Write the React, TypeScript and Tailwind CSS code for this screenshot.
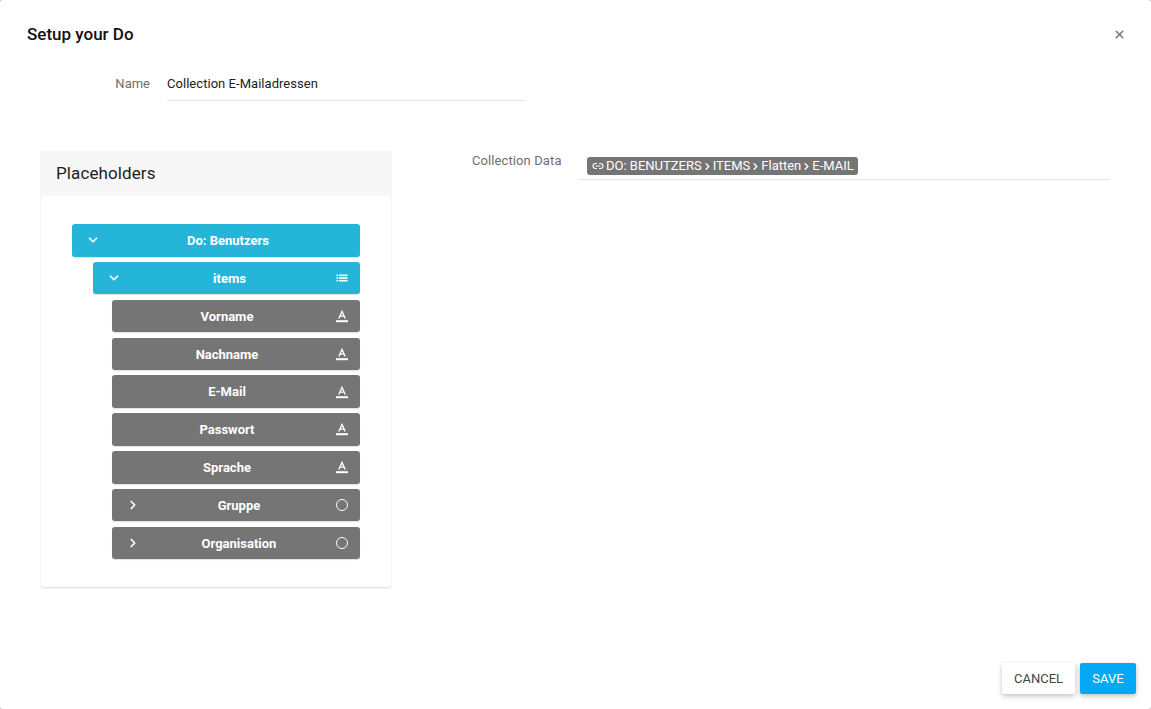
import React from "react";
import { ChevronDown, ChevronRight, Link2, X } from "lucide-react";

function TextIcon() {
  return (
    <svg width="14" height="14" viewBox="0 0 14 14" fill="none" stroke="white">
      <path d="M3.8 9.6 7 2.4l3.2 7.2M5 7.2h4" strokeWidth="1.3" />
      <path d="M1 12.2h12" strokeWidth="2" />
    </svg>
  );
}

function ListIcon() {
  return (
    <svg width="12" height="10" viewBox="0 0 12 10" fill="white">
      <rect x="0.5" y="1.5" width="1.6" height="1.6" />
      <rect x="0.5" y="4.2" width="1.6" height="1.6" />
      <rect x="0.5" y="6.9" width="1.6" height="1.6" />
      <rect x="3" y="1.5" width="8.5" height="1.6" />
      <rect x="3" y="4.2" width="8.5" height="1.6" />
      <rect x="3" y="6.9" width="8.5" height="1.6" />
    </svg>
  );
}

function Row({ label, color, indent, chevron, icon, iconWidth = "w-[37px]" }: { label: string; color: string; indent: string; chevron?: "down" | "right"; icon: React.ReactNode; iconWidth?: string }) {
  return (
    <div className={`${indent} ${color} h-[32.5px] rounded-[3px] flex items-center text-white text-[13px] font-bold shadow-[0_1px_1px_rgba(0,0,0,0.12)]`}>
      <div className={`${chevron ? "w-[42px] mr-[1px]" : "w-[19px]"} flex justify-center shrink-0`}>
        {chevron === "down" && <ChevronDown size={14} strokeWidth={3} />}
        {chevron === "right" && <ChevronRight size={14} strokeWidth={3} />}
      </div>
      <div className="flex-1 text-center pt-[1px]">{label}</div>
      <div className={`${iconWidth} flex justify-center shrink-0`}>{icon}</div>
    </div>
  );
}

export default function App() {
  const circle = <div className="w-[12px] h-[12px] rounded-full border-[1.3px] border-white" />;
  const blue = "bg-[#25b5d9]";
  const gray = "bg-[#757575]";
  return (
    <div className="w-[1151px] h-[709px] bg-[#c4c4c4]">
      <div className="w-full h-full bg-white rounded-[3px] flex flex-col text-[#212121] font-['Roboto',sans-serif] overflow-hidden">
        <div className="flex items-center justify-between pl-[27px] pr-[25px] pt-[24px] h-[58px] shrink-0 pb-[14px]">
          <h1 className="text-[17px] font-medium leading-5 text-[#111]">Setup your Do</h1>
          <X size={13} strokeWidth={2.8} className="text-[#777]" />
        </div>

        <div className="flex h-[43px] shrink-0">
          <div className="w-[150px] text-right text-[13px] text-[#6e6e6e] pt-[18px] leading-4">Name</div>
          <div className="ml-[17px] w-[358px] border-b border-[#e2e2e2] text-[13px] tracking-[0.04px] text-[#212121] pt-[18px] leading-4">Collection E-Mailadressen</div>
        </div>

        <div className="flex mt-[50px] flex-1 min-h-0">
          <div className="ml-[41px] w-[350px] h-[436px] shrink-0 rounded-[3px] bg-white shadow-[0_1px_2px_rgba(0,0,0,0.14)]">
            <div className="h-[45px] bg-[#f7f7f7] flex items-center pl-[15px] pt-[1px] text-[17px] tracking-[0.1px] text-[#212121]">Placeholders</div>
            <div className="pt-[28px] pl-[31px] pr-[31px] flex flex-col gap-[5.35px]">
              <Row label="Do: Benutzers" color={blue} indent="" chevron="down" icon={null} iconWidth="w-[19px]" />
              <Row label="items" color={blue} indent="ml-[21px]" chevron="down" icon={<ListIcon />} />
              <Row label="Vorname" color={gray} indent="ml-[40px]" icon={<TextIcon />} />
              <Row label="Nachname" color={gray} indent="ml-[40px]" icon={<TextIcon />} />
              <Row label="E-Mail" color={gray} indent="ml-[40px]" icon={<TextIcon />} />
              <Row label="Passwort" color={gray} indent="ml-[40px]" icon={<TextIcon />} />
              <Row label="Sprache" color={gray} indent="ml-[40px]" icon={<TextIcon />} />
              <Row label="Gruppe" color={gray} indent="ml-[40px]" chevron="right" icon={circle} />
              <Row label="Organisation" color={gray} indent="ml-[40px]" chevron="right" icon={circle} />
            </div>
          </div>

          <div className="flex items-start h-[29px] ml-[81px]">
            <div className="text-[13px] text-[#6e6e6e] leading-4 pt-[2px] w-[107px] tracking-[0.1px]">Collection Data</div>
            <div className="w-[531px] h-[29px] border-b border-[#e2e2e2] pl-[8px] pt-[5px]">
              <span className="inline-flex items-center h-[18px] pl-[5px] pr-[4px] rounded-[3px] bg-[#757575] text-white text-[13px] -translate-y-[1px]">
                <Link2 size={12} strokeWidth={2.2} className="mr-[2px]" />
                DO: BENUTZERS
                <ChevronRight size={11} strokeWidth={3} />
                ITEMS
                <ChevronRight size={11} strokeWidth={3} />
                Flatten
                <ChevronRight size={11} strokeWidth={3} />
                E-MAIL
              </span>
            </div>
          </div>
        </div>

        <div className="flex justify-end gap-[5px] pr-[15px] pb-[15px] shrink-0">
          <button className="w-[73px] h-[31px] rounded-[2px] bg-white text-[#444] text-[13px] shadow-[0_2px_5px_rgba(0,0,0,0.25)]">CANCEL</button>
          <button className="w-[56px] h-[31px] rounded-[2px] bg-[#03a9f4] text-white text-[13px] shadow-[0_2px_5px_rgba(0,0,0,0.25)]">SAVE</button>
        </div>
      </div>
    </div>
  );
}
